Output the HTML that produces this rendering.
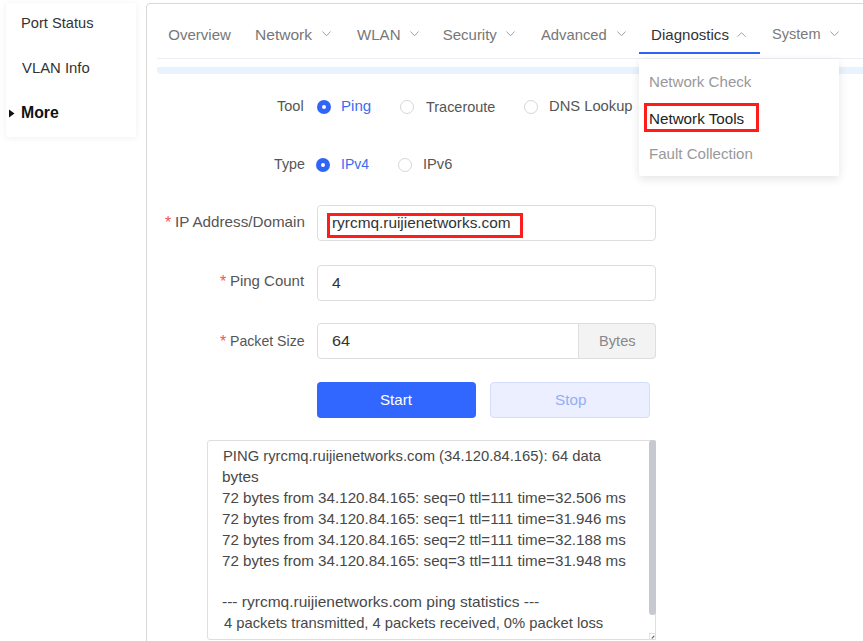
<!DOCTYPE html>
<html><head><meta charset="utf-8"><style>
html,body{margin:0;padding:0;background:#fff;width:863px;height:641px;overflow:hidden;position:relative;font-family:"Liberation Sans",sans-serif;}
.a{position:absolute;box-sizing:border-box;}
.t{position:absolute;white-space:nowrap;transform-origin:0 0;}
.radio{position:absolute;box-sizing:border-box;width:14px;height:14px;border:1px solid #d6d6d6;border-radius:50%;background:#fff;}
.radio.on{border:5px solid #2f66f5;}
.inp{position:absolute;box-sizing:border-box;left:317px;width:339px;height:36px;border:1px solid #dedede;border-radius:4px;background:#fff;}
.req{position:absolute;color:#f0555a;font-size:16px;line-height:16px;}
</style></head><body>
<div class="a" style="left:6px;top:3px;width:130px;height:134px;background:#fff;box-shadow:0 1px 6px rgba(120,140,180,0.13);"></div>
<div class="t" style="left:20.82px;top:15px;font-size:15px;line-height:15px;color:#333;transform:scaleX(0.9767);">Port Status</div>
<div class="t" style="left:21.8px;top:60px;font-size:15px;line-height:15px;color:#333;transform:scaleX(0.9912);">VLAN Info</div>
<svg class="a" style="left:9px;top:109px" width="6" height="9"><path d="M0 0.5 L5.5 4.5 L0 8.5Z" fill="#111"/></svg>
<div class="t" style="left:20.71px;top:105px;font-size:16px;line-height:16px;color:#111;font-weight:bold;transform:scaleX(0.9865);">More</div>
<div class="a" style="left:146px;top:3px;width:760px;height:700px;border:1px solid #d9d9d9;border-radius:4px;background:#fff;"></div>
<div class="a" style="left:157px;top:58px;width:706px;height:1px;background:#eceef4;"></div>
<div class="a" style="left:157px;top:67px;width:706px;height:7px;background:#e8f3fe;border-radius:0 0 0 4px;"></div>
<div class="t" style="left:168.3px;top:27px;font-size:15px;line-height:15px;color:#777;">Overview</div>
<div class="t" style="left:255.46px;top:27px;font-size:15px;line-height:15px;color:#777;transform:scaleX(1.037);">Network</div>
<div class="t" style="left:357.0px;top:27px;font-size:15px;line-height:15px;color:#777;transform:scaleX(1.0048);">WLAN</div>
<div class="t" style="left:442.7px;top:27px;font-size:15px;line-height:15px;color:#777;">Security</div>
<div class="t" style="left:540.8px;top:27px;font-size:15px;line-height:15px;color:#777;transform:scaleX(0.9864);">Advanced</div>
<div class="t" style="left:650.59px;top:27px;font-size:15px;line-height:15px;color:#333;transform:scaleX(1.0053);">Diagnostics</div>
<div class="t" style="left:771.63px;top:26px;font-size:15px;line-height:15px;color:#7a7a7a;transform:scaleX(0.9708);">System</div>
<svg class="a" style="left:322px;top:31px;overflow:visible" width="9" height="5"><path d="M0.5 0.5 L4.5 4.8 L8.5 0.5" fill="none" stroke="#a2a2a2" stroke-width="1"/></svg>
<svg class="a" style="left:410px;top:31px;overflow:visible" width="9" height="5"><path d="M0.5 0.5 L4.5 4.8 L8.5 0.5" fill="none" stroke="#a2a2a2" stroke-width="1"/></svg>
<svg class="a" style="left:506px;top:31px;overflow:visible" width="9" height="5"><path d="M0.5 0.5 L4.5 4.8 L8.5 0.5" fill="none" stroke="#a2a2a2" stroke-width="1"/></svg>
<svg class="a" style="left:617px;top:31px;overflow:visible" width="9" height="5"><path d="M0.5 0.5 L4.5 4.8 L8.5 0.5" fill="none" stroke="#a2a2a2" stroke-width="1"/></svg>
<svg class="a" style="left:737px;top:32px;overflow:visible" width="9" height="5"><path d="M0.5 4.7 L4.5 0.6 L8.5 4.7" fill="none" stroke="#a2a2a2" stroke-width="1"/></svg>
<svg class="a" style="left:830px;top:31px;overflow:visible" width="9" height="5"><path d="M0.5 0.5 L4.5 4.8 L8.5 0.5" fill="none" stroke="#a2a2a2" stroke-width="1"/></svg>
<div class="a" style="left:639px;top:52px;width:121px;height:2px;background:#2c62f6;"></div>
<div class="radio on" style="left:317px;top:100px;"></div>
<div class="radio" style="left:400px;top:100px;"></div>
<div class="radio" style="left:524px;top:100px;"></div>
<div class="t" style="left:277.4px;top:98px;font-size:15px;line-height:15px;color:#555;transform:scaleX(0.9667);">Tool</div>
<div class="t" style="left:340.79px;top:98px;font-size:15px;line-height:15px;color:#3b6cf0;transform:scaleX(1.0071);">Ping</div>
<div class="t" style="left:425.5px;top:99px;font-size:15px;line-height:15px;color:#555;transform:scaleX(0.9634);">Traceroute</div>
<div class="t" style="left:548.52px;top:98px;font-size:15px;line-height:15px;color:#555;transform:scaleX(0.9821);">DNS Lookup</div>
<div class="radio on" style="left:316px;top:158px;"></div>
<div class="radio" style="left:398px;top:158px;"></div>
<div class="t" style="left:274.0px;top:156px;font-size:15px;line-height:15px;color:#555;transform:scaleX(0.9469);">Type</div>
<div class="t" style="left:340.57px;top:156px;font-size:15px;line-height:15px;color:#3b6cf0;transform:scaleX(0.9345);">IPv4</div>
<div class="t" style="left:422.62px;top:156px;font-size:15px;line-height:15px;color:#555;transform:scaleX(0.975);">IPv6</div>
<div class="req" style="left:165px;top:215px;">*</div>
<div class="inp" style="top:205px;"></div>
<div class="t" style="left:175.39px;top:214px;font-size:15px;line-height:15px;color:#555;transform:scaleX(1.0135);">IP Address/Domain</div>
<div class="t" style="left:331.97px;top:215px;font-size:15px;line-height:15px;color:#333;transform:scaleX(1.0256);">ryrcmq.ruijienetworks.com</div>
<div class="a" style="left:327px;top:213px;width:196px;height:25px;border:3px solid #ff1c1c;"></div>
<div class="req" style="left:220px;top:274px;">*</div>
<div class="inp" style="top:265px;"></div>
<div class="t" style="left:229.9px;top:273px;font-size:15px;line-height:15px;color:#555;">Ping Count</div>
<div class="t" style="left:332.4px;top:275px;font-size:15px;line-height:15px;color:#333;transform:scaleX(1.05);">4</div>
<div class="req" style="left:220px;top:334px;">*</div>
<div class="inp" style="top:323px;"></div>
<div class="a" style="left:578px;top:323px;width:78px;height:36px;border:1px solid #dedede;border-radius:0 4px 4px 0;background:#f3f3f3;"></div>
<div class="t" style="left:230.46px;top:333px;font-size:15px;line-height:15px;color:#555;transform:scaleX(0.9416);">Packet Size</div>
<div class="t" style="left:331.82px;top:333px;font-size:15px;line-height:15px;color:#333;transform:scaleX(1.08);">64</div>
<div class="t" style="left:599.02px;top:333px;font-size:15px;line-height:15px;color:#888;transform:scaleX(0.975);">Bytes</div>
<div class="a" style="left:317px;top:382px;width:159px;height:36px;background:#3267ff;border-radius:4px;"></div>
<div class="a" style="left:490px;top:382px;width:160px;height:36px;background:#ebefff;border:1px solid #d3ddfb;border-radius:4px;"></div>
<div class="t" style="left:380.29px;top:392px;font-size:15px;line-height:15px;color:#fff;transform:scaleX(1.0065);">Start</div>
<div class="t" style="left:554.78px;top:392px;font-size:15px;line-height:15px;color:#94aef8;transform:scaleX(1.0207);">Stop</div>
<div class="a" style="left:207px;top:440px;width:449px;height:200px;border:1px solid #dedede;border-radius:3px 0 0 3px;background:#fff;"></div>
<div class="a" style="left:649px;top:440px;width:7px;height:175px;background:#c6cacf;border-radius:3.5px;"></div>
<div class="a" style="left:649px;top:633px;width:7px;height:7px;border-left:1px solid #e2e2e2;border-top:1px solid #e2e2e2;"></div>
<svg class="a" style="left:651px;top:635px" width="4" height="4"><path d="M3 1.2 L1.2 3" stroke="#666" stroke-width="1.2" stroke-linecap="round"/></svg>
<div class="t" style="left:222.51px;top:448px;font-size:15px;line-height:15px;color:#484848;transform:scaleX(0.9856);">PING ryrcmq.ruijienetworks.com (34.120.84.165): 64 data</div>
<div class="t" style="left:222.48px;top:469px;font-size:15px;line-height:15px;color:#484848;transform:scaleX(1.0235);">bytes</div>
<div class="t" style="left:222.49px;top:490px;font-size:15px;line-height:15px;color:#484848;transform:scaleX(1.0113);">72 bytes from 34.120.84.165: seq=0 ttl=111 time=32.506 ms</div>
<div class="t" style="left:222.49px;top:511px;font-size:15px;line-height:15px;color:#484848;transform:scaleX(1.0113);">72 bytes from 34.120.84.165: seq=1 ttl=111 time=31.946 ms</div>
<div class="t" style="left:222.49px;top:532px;font-size:15px;line-height:15px;color:#484848;transform:scaleX(1.0113);">72 bytes from 34.120.84.165: seq=2 ttl=111 time=32.188 ms</div>
<div class="t" style="left:222.49px;top:553px;font-size:15px;line-height:15px;color:#484848;transform:scaleX(1.0113);">72 bytes from 34.120.84.165: seq=3 ttl=111 time=31.948 ms</div>
<div class="t" style="left:222.47px;top:594px;font-size:15px;line-height:15px;color:#484848;transform:scaleX(1.0344);">--- ryrcmq.ruijienetworks.com ping statistics ---</div>
<div class="t" style="left:223.5px;top:615px;font-size:15px;line-height:15px;color:#484848;transform:scaleX(0.9844);">4 packets transmitted, 4 packets received, 0% packet loss</div>
<div class="a" style="left:639px;top:59px;width:200px;height:117px;background:#fff;box-shadow:0 3px 10px rgba(0,0,0,0.11);border-radius:2px;"></div>
<div class="t" style="left:649.29px;top:74px;font-size:15px;line-height:15px;color:#999;transform:scaleX(1.007);">Network Check</div>
<div class="t" style="left:649.09px;top:111px;font-size:15px;line-height:15px;color:#222;transform:scaleX(1.0129);">Network Tools</div>
<div class="t" style="left:649.3px;top:146px;font-size:15px;line-height:15px;color:#999;transform:scaleX(1.004);">Fault Collection</div>
<div class="a" style="left:644px;top:103px;width:115px;height:29px;border:3px solid #ff1c1c;"></div>
</body></html>
